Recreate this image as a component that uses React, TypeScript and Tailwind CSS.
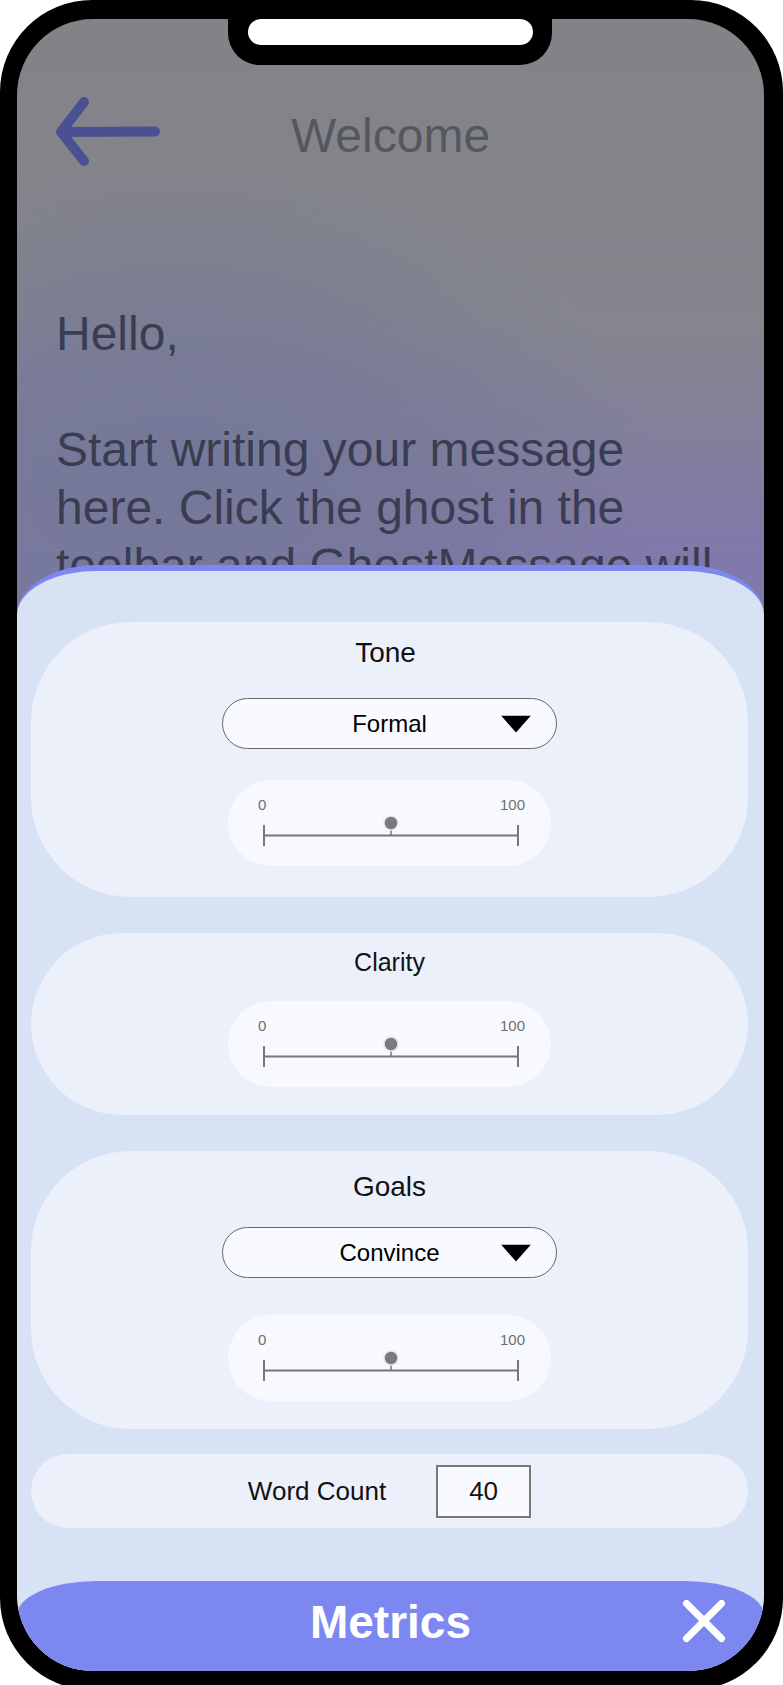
import React from 'react';

function Dropdown({ label, className = '' }: { label: string; className?: string }) {
  return (
    <div
      className={`relative flex h-[51px] w-[335px] items-center justify-center rounded-full border-[1.5px] border-[#666] bg-[#f8faff] ${className}`}
    >
      <span className="text-[24px] leading-none text-black">{label}</span>
      <svg
        className="absolute right-[25px] top-1/2 -translate-y-1/2"
        width="30"
        height="17"
        viewBox="0 0 30 17"
      >
        <polygon points="0,0 30,0 15,17" fill="#000" />
      </svg>
    </div>
  );
}

function Slider({ className = '' }: { className?: string }) {
  return (
    <div
      className={`flex h-[86px] w-[323px] flex-col rounded-full bg-[#f7f9fe] pl-[30px] pr-[26px] pt-[17px] ${className}`}
    >
      <div className="flex justify-between text-[15px] leading-none text-[#6f6f6f]">
        <span>0</span>
        <span>100</span>
      </div>
      <svg className="ml-[5px] mt-[3px]" width="256" height="32" viewBox="0 0 256 32">
        <line x1="1" y1="20.5" x2="255" y2="20.5" stroke="#777" strokeWidth="2" />
        <line x1="1" y1="10" x2="1" y2="31" stroke="#777" strokeWidth="2" />
        <line x1="255" y1="10" x2="255" y2="31" stroke="#777" strokeWidth="2" />
        <line x1="128" y1="13" x2="128" y2="20" stroke="#777" strokeWidth="1.5" />
        <circle cx="128" cy="8" r="7" fill="#7b7b7b" stroke="#e3e7f3" strokeWidth="1.5" />
      </svg>
    </div>
  );
}

export default function App() {
  return (
    <div className="h-[1685px] w-[783px] overflow-hidden bg-white font-['Liberation_Sans',Arial,sans-serif]">
      <div className="relative h-[1690px] rounded-[92px] bg-black pb-[19px] pl-[17px] pr-[19px] pt-[19px]">
        {/* notch */}
        <div className="absolute left-[228px] top-0 z-20 h-[65px] w-[324px] rounded-b-[32px] bg-black pt-[19px]">
          <div className="mx-auto h-[26px] w-[285px] rounded-[13px] bg-white" />
        </div>

        <div className="relative h-full overflow-hidden rounded-[76px] bg-[radial-gradient(ellipse_480px_320px_at_160px_460px,rgba(116,120,152,1)_0%,rgba(116,120,152,0.6)_50%,rgba(116,120,152,0)_100%),linear-gradient(180deg,#828287_0px,#85868d_300px,#8079ab_540px)]">
          <div className="grid grid-cols-[1fr_auto_1fr] items-start pt-[88px]">
            <div className="-mt-[10px] pl-[38px]">
              <svg width="105" height="69" viewBox="0 0 105 69" fill="none">
                <path
                  d="M100 34.5 L6 35 M29 5 L6 35 L29 64"
                  stroke="#4a5190"
                  strokeWidth="10"
                  strokeLinecap="round"
                  strokeLinejoin="round"
                />
              </svg>
            </div>
            <h1 className="text-[48px] leading-[58px] text-[#55575f]">Welcome</h1>
            <div />
          </div>

          <p className="ml-[39px] mt-[139px] w-[670px] text-[48px] leading-[58px] text-[#3a3d52]">
            Hello,
            <br />
            <br />
            Start writing your message here. Click the ghost in the toolbar and GhostMessage will
          </p>

          {/* bottom sheet */}
          <div className="absolute inset-x-0 bottom-0 top-[546px] z-10 flex flex-col rounded-tl-[80px_50px] rounded-tr-[80px_50px] border-t-[6px] border-[#7c87f0] bg-[#d7e2f5]">
            <div className="flex flex-col pl-[14px] pr-[16px] pt-[51px]">
              <div className="flex flex-col items-center rounded-[100px] bg-[#ebf0fb] pb-[31px] pt-[17px]">
                <h2 className="-ml-[8px] text-[28px] leading-none text-[#111]">Tone</h2>
                <Dropdown label="Formal" className="mt-[31px]" />
                <Slider className="mt-[31px]" />
              </div>

              <div className="mt-[36px] flex flex-col items-center rounded-[100px] bg-[#ebf0fb] pb-[28px] pt-[17px]">
                <h2 className="text-[25px] leading-none text-[#111]">Clarity</h2>
                <Slider className="mt-[26px]" />
              </div>

              <div className="mt-[36px] flex flex-col items-center rounded-[100px] bg-[#ebf0fb] pb-[28px] pt-[22px]">
                <h2 className="text-[28px] leading-none text-[#111]">Goals</h2>
                <Dropdown label="Convince" className="mt-[26px]" />
                <Slider className="mt-[37px]" />
              </div>

              <div className="mt-[25px] flex h-[74px] items-center justify-center gap-[50px] rounded-full bg-[#ebf0fb]">
                <span className="text-[26px] leading-none text-[#111]">Word Count</span>
                <div className="flex h-[53px] w-[95px] items-center justify-center border-2 border-[#787878] bg-[#f8faff] text-[26px] leading-none text-[#111]">
                  40
                </div>
              </div>
            </div>

            <div className="mt-auto grid h-[90px] grid-cols-[1fr_auto_1fr] items-start rounded-tl-[80px_34px] rounded-tr-[80px_34px] bg-[#7c87f0] pt-[18px]">
              <div />
              <span className="text-[46px] font-bold leading-none text-white">Metrics</span>
              <div className="flex justify-end pr-[38px]">
                <svg width="44" height="44" viewBox="0 0 44 44" fill="none">
                  <path
                    d="M4.5 4.5 L39.5 39.5 M39.5 4.5 L4.5 39.5"
                    stroke="#fff"
                    strokeWidth="7"
                    strokeLinecap="round"
                  />
                </svg>
              </div>
            </div>
          </div>
        </div>
      </div>
    </div>
  );
}
